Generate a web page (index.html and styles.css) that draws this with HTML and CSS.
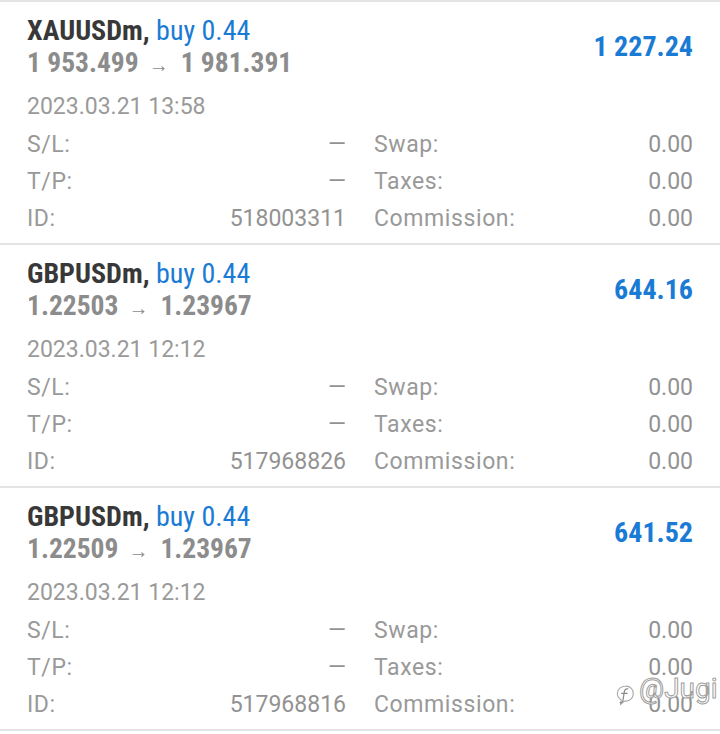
FILE: index.html
```html
<!DOCTYPE html>
<html>
<head>
<meta charset="utf-8">
<link rel="stylesheet" href="styles.css">
</head>
<body>
<div class="list">
  <div class="deal">
    <div class="head">
      <div class="title">
        <div class="sym"><span class="name">XAUUSDm,</span> <span class="type">buy 0.44</span></div>
        <div class="prices">1 953.499<span class="arrow">→</span>1 981.391</div>
      </div>
      <div class="profit">1 227.24</div>
    </div>
    <div class="date">2023.03.21 13:58</div>
    <div class="grid">
      <div class="cell"><span class="lbl">S/L:</span><span class="val">—</span></div>
      <div class="cell"><span class="lbl">Swap:</span><span class="val">0.00</span></div>
      <div class="cell"><span class="lbl">T/P:</span><span class="val">—</span></div>
      <div class="cell"><span class="lbl">Taxes:</span><span class="val">0.00</span></div>
      <div class="cell"><span class="lbl">ID:</span><span class="val">518003311</span></div>
      <div class="cell"><span class="lbl">Commission:</span><span class="val">0.00</span></div>
    </div>
  </div>
  <div class="deal">
    <div class="head">
      <div class="title">
        <div class="sym"><span class="name">GBPUSDm,</span> <span class="type">buy 0.44</span></div>
        <div class="prices">1.22503<span class="arrow">→</span>1.23967</div>
      </div>
      <div class="profit">644.16</div>
    </div>
    <div class="date">2023.03.21 12:12</div>
    <div class="grid">
      <div class="cell"><span class="lbl">S/L:</span><span class="val">—</span></div>
      <div class="cell"><span class="lbl">Swap:</span><span class="val">0.00</span></div>
      <div class="cell"><span class="lbl">T/P:</span><span class="val">—</span></div>
      <div class="cell"><span class="lbl">Taxes:</span><span class="val">0.00</span></div>
      <div class="cell"><span class="lbl">ID:</span><span class="val">517968826</span></div>
      <div class="cell"><span class="lbl">Commission:</span><span class="val">0.00</span></div>
    </div>
  </div>
  <div class="deal">
    <div class="head">
      <div class="title">
        <div class="sym"><span class="name">GBPUSDm,</span> <span class="type">buy 0.44</span></div>
        <div class="prices">1.22509<span class="arrow">→</span>1.23967</div>
      </div>
      <div class="profit">641.52</div>
    </div>
    <div class="date">2023.03.21 12:12</div>
    <div class="grid">
      <div class="cell"><span class="lbl">S/L:</span><span class="val">—</span></div>
      <div class="cell"><span class="lbl">Swap:</span><span class="val">0.00</span></div>
      <div class="cell"><span class="lbl">T/P:</span><span class="val">—</span></div>
      <div class="cell"><span class="lbl">Taxes:</span><span class="val">0.00</span></div>
      <div class="cell"><span class="lbl">ID:</span><span class="val">517968816</span></div>
      <div class="cell"><span class="lbl">Commission:</span><span class="val">0.00</span></div>
    </div>
  </div>
</div>
<div class="watermark">
  <svg class="wm-logo" width="20" height="22" viewBox="0 0 18 20">
    <path d="M9 2 C14 1.5 17 5 16.5 9.5 C16 13.5 12.5 16 8.5 15.5 L5 18.5 L5.5 14.5 C2.5 12.5 1.5 9.5 2.5 6.5 C3.5 3.8 6 2.2 9 2 Z" fill="#ffffff" stroke="#a8a8a8" stroke-width="1"/>
    <path d="M11.5 4.5 C9.5 4 8.5 5.5 8.2 8 L7.2 14.5 C6.9 16.5 5.8 17.2 4.6 16.8 M6 8.5 L11 8.5" fill="none" stroke="#8a8a8a" stroke-width="1.1" stroke-linecap="round"/>
  </svg>
  <span class="wm-text">@Jugi</span>
</div>
</body>
</html>
```
FILE: styles.css
```css
html, body {
  margin: 0;
  padding: 0;
  background: #ffffff;
}
body {
  font-family: Roboto, "Noto Sans", sans-serif;
  position: relative;
  width: 720px;
  height: 734px;
  overflow: hidden;
}
.list {
  border-top: 2px solid #e4e4e4;
}
.deal {
  padding: 13px 27px 6px 27px;
  border-bottom: 2px solid #e4e4e4;
}
.head {
  display: flex;
  justify-content: space-between;
  align-items: center;
}
.title {
  font-family: "Roboto Condensed", Roboto, sans-serif;
}
.sym {
  font-size: 28px;
  line-height: 32px;
  white-space: nowrap;
}
.name {
  font-weight: 700;
  color: #383838;
}
.type {
  color: #1a7bd5;
}
.prices {
  font-size: 27.5px;
  line-height: 32px;
  font-weight: 700;
  color: #8c8c8c;
  white-space: nowrap;
}
.arrow {
  display: inline-block;
  font-family: Roboto, sans-serif;
  font-size: 20px;
  font-weight: 400;
  margin: 0 12px 0 10px;
}
.profit {
  font-family: "Roboto Condensed", Roboto, sans-serif;
  font-weight: 700;
  font-size: 28px;
  line-height: 34px;
  color: #1a7bd5;
  white-space: nowrap;
  margin-top: -2px;
}
.date {
  margin-top: 7px;
  font-size: 23px;
  line-height: 37px;
  color: #9a9a9a;
}
.grid {
  margin-top: 1px;
  display: grid;
  grid-template-columns: 1fr 1fr;
  column-gap: 28px;
  font-size: 23px;
  line-height: 37px;
  color: #999999;
}
.cell {
  display: flex;
  justify-content: space-between;
  white-space: nowrap;
}
.lbl {
  letter-spacing: 0.6px;
}
.val {
  color: #929292;
}
.watermark {
  position: absolute;
  left: 615px;
  top: 672px;
  display: flex;
  align-items: center;
  gap: 4px;
  white-space: nowrap;
}
.wm-logo {
  margin-top: 12px;
}
.wm-text {
  font-family: Roboto, sans-serif;
  font-size: 28px;
  line-height: 34px;
  color: #ffffff;
  -webkit-text-stroke: 1px #a0a0a0;
}
```
